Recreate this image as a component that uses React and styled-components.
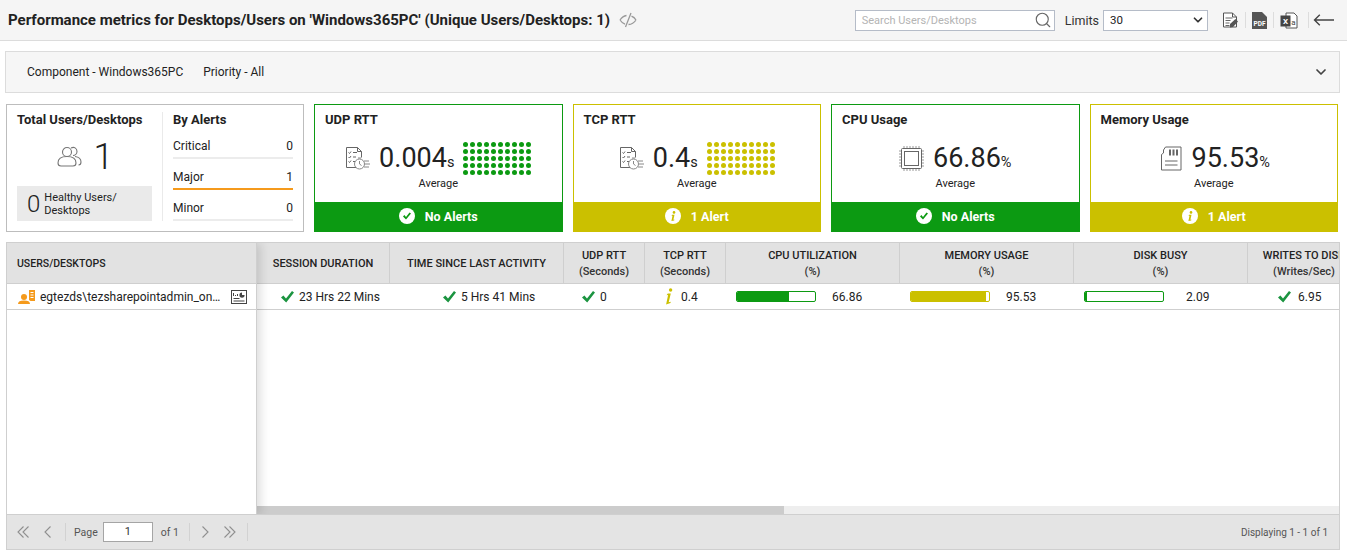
import React from "react";
import styled, { createGlobalStyle } from "styled-components";
import { Search, ChevronDown } from "lucide-react";

const GREEN = "#0c9a12";
const YELLOW = "#cbc000";

const Global = createGlobalStyle`
  html, body { margin: 0; padding: 0; background: #fff; }
  body { font-family: Roboto, "Liberation Sans", sans-serif; color: #222; }
  * { box-sizing: border-box; }
`;

const Page = styled.div`
  width: 1347px;
  height: 558px;
  overflow: hidden;
  display: flex;
  flex-direction: column;
`;

const TopBar = styled.header`
  height: 41px;
  flex: none;
  background: #f5f5f5;
  border-bottom: 1px solid #dcdcdc;
  display: flex;
  align-items: center;
  padding: 0 13px 0 8px;
`;

const Title = styled.h1`
  margin: 0;
  font-size: 15px;
  font-weight: 700;
  color: #222;
  white-space: nowrap;
`;

const TitleIcon = styled.svg`
  width: 18px;
  height: 16px;
  margin-left: 9px;
  margin-right: auto;
`;

const SearchBox = styled.div`
  width: 200px;
  height: 21px;
  border: 1px solid #b5bcc8;
  background: #fff;
  display: flex;
  align-items: center;
  justify-content: space-between;
  padding: 0 2px 0 6px;
  font-size: 11px;
  color: #b4b4b4;
`;

const LimitsLabel = styled.span`
  font-size: 12.5px;
  color: #333;
  margin-left: 10px;
`;

const LimitsSelect = styled.div`
  width: 105px;
  height: 21px;
  margin-left: 4px;
  border: 1px solid #b5bcc8;
  background: #fff;
  display: flex;
  align-items: center;
  justify-content: space-between;
  padding: 0 2px 0 6px;
  font-size: 11.5px;
  color: #222;
`;

const Tools = styled.div`
  display: flex;
  align-items: center;
  margin-left: 14px;
`;

const ToolSep = styled.span`
  width: 1px;
  height: 16px;
  background: #ddd;
  margin: 0 ${(p) => p.$r || 6}px 0 ${(p) => p.$l || 6}px;
`;

const Main = styled.main`
  flex: 1;
  min-height: 0;
  display: flex;
  flex-direction: column;
  padding: 10px 7px 8px 6px;
`;

const FilterBar = styled.div`
  height: 42px;
  flex: none;
  margin-left: -1px;
  background: #f6f6f6;
  border: 1px solid #dcdcdc;
  display: flex;
  align-items: center;
  padding: 0 10px 0 21px;
  font-size: 12px;
  color: #222;
`;

const FilterItem = styled.span`
  margin-right: 20px;
`;

const FilterToggle = styled.span`
  margin-left: auto;
  display: flex;
`;

const CardRow = styled.section`
  height: 128px;
  flex: none;
  margin: 11px 2px 0 0;
  display: flex;
  gap: 10px;
`;

const SummaryCard = styled.div`
  width: 298px;
  flex: none;
  border: 1px solid #bdbdbd;
  display: flex;
  padding: 7px 10px 10px;
`;

const SummaryLeft = styled.div`
  width: 146px;
  padding-right: 11px;
  border-right: 1px solid #eaeaea;
  display: flex;
  flex-direction: column;
`;

const CardTitle = styled.div`
  font-size: 13px;
  font-weight: 700;
  line-height: 15px;
  color: #222;
`;

const TotalLine = styled.div`
  flex: 1;
  display: flex;
  align-items: center;
  justify-content: center;
  gap: 12px;
  padding-left: 2px;
  font-size: 36px;
  font-weight: 300;
  color: #222;
`;

const HealthyBox = styled.div`
  height: 35px;
  width: 135px;
  background: #eaeaea;
  display: flex;
  align-items: center;
  padding-left: 10px;
  gap: 4px;
`;

const HealthyNum = styled.span`
  font-size: 24px;
  font-weight: 300;
`;

const HealthyText = styled.span`
  font-size: 11px;
  line-height: 13px;
`;

const SummaryRight = styled.div`
  flex: 1;
  padding-left: 10px;
`;

const AlertRows = styled.div`
  margin-top: 1px;
`;

const AlertRow = styled.div`
  height: 31px;
  display: flex;
  align-items: center;
  justify-content: space-between;
  font-size: 12px;
  color: #222;
  border-bottom: 2px solid ${(p) => p.$line || "#ececec"};
  padding-top: 7px;
`;

const MetricCard = styled.div`
  flex: 1;
  min-width: 0;
  border: 1px solid ${(p) => p.$color};
  display: flex;
  flex-direction: column;
`;

const MetricBody = styled.div`
  flex: 1;
  padding: 7px 10px 0;
`;

const MetricMain = styled.div`
  display: flex;
  align-items: center;
  justify-content: center;
  height: 37px;
  margin-top: 13px;
`;

const MetricIcon = styled.svg`
  width: 25px;
  height: 25px;
  margin-right: 9px;
  flex: none;
`;

const Value = styled.span`
  font-size: 27px;
  line-height: 34px;
  font-weight: 400;
  color: #222;
  margin-top: 3px;
`;

const Unit = styled.span`
  font-size: 14.5px;
`;

const Dots = styled.div`
  display: grid;
  grid-template-columns: repeat(10, 5px);
  grid-auto-rows: 5px;
  gap: 2px;
  margin-left: 9px;
`;

const Dot = styled.i`
  display: block;
  border-radius: 50%;
  background: ${(p) => p.$color};
`;

const Average = styled.div`
  text-align: center;
  font-size: 11px;
  line-height: 14px;
  color: #222;
`;

const AlertBar = styled.div`
  height: 30px;
  flex: none;
  margin: 0 -1px -1px;
  padding-bottom: 2px;
  background: ${(p) => p.$color};
  color: #fff;
  font-size: 12.5px;
  font-weight: 700;
  display: flex;
  align-items: center;
  justify-content: center;
  gap: 10px;
`;

const GridWrap = styled.section`
  flex: 1;
  min-height: 0;
  margin-top: 10px;
  border: 1px solid #cfcfcf;
  display: flex;
  flex-direction: column;
`;

const GridBody = styled.div`
  flex: 1;
  min-height: 0;
  display: flex;
  overflow: hidden;
`;

const FrozenCol = styled.div`
  width: 250px;
  flex: none;
  border-right: 1px solid #cfcfcf;
  box-shadow: 3px 0 10px rgba(0, 0, 0, 0.15);
  position: relative;
  background: #fff;
  z-index: 1;
`;

const FrozenHead = styled.div`
  height: 41px;
  background: #e2e2e2;
  border-bottom: 1px solid #cfcfcf;
  display: flex;
  align-items: center;
  padding-left: 10px;
  font-size: 10.5px;
  font-weight: 500;
  color: #222;
`;

const FrozenRow = styled.div`
  height: 26px;
  border-bottom: 1px solid #cfcfcf;
  display: flex;
  align-items: center;
  padding: 0 9px 0 11px;
  font-size: 12px;
  color: #222;
`;

const RowName = styled.span`
  flex: 1;
  min-width: 0;
  margin: 0 8px 0 5px;
  white-space: nowrap;
  overflow: hidden;
  text-overflow: ellipsis;
`;

const ScrollCol = styled.div`
  flex: 1;
  min-width: 0;
  display: flex;
  flex-direction: column;
  overflow: hidden;
`;

const ColsRow = styled.div`
  display: flex;
  width: max-content;
`;

const HeadCell = styled.div`
  width: ${(p) => p.$w}px;
  height: 41px;
  flex: none;
  padding-top: 2px;
  background: #e2e2e2;
  border-right: 1px solid #cfcfcf;
  border-bottom: 1px solid #cfcfcf;
  display: flex;
  flex-direction: column;
  align-items: center;
  justify-content: center;
  font-size: 11px;
  font-weight: 500;
  line-height: 16px;
  color: #222;
  white-space: nowrap;
`;

const HeadSub = styled.span`
  font-weight: 500;
  color: #333;
`;

const Cell = styled.div`
  width: ${(p) => p.$w}px;
  height: 26px;
  flex: none;
  border-bottom: 1px solid #cfcfcf;
  display: flex;
  align-items: center;
  padding-left: ${(p) => p.$pad}px;
  gap: ${(p) => p.$gap || 5}px;
  font-size: 12px;
  color: #222;
`;

const RowFill = styled.div`
  flex: 1;
`;

const Bar = styled.div`
  width: 80px;
  height: 11px;
  flex: none;
  border: 1px solid ${(p) => p.$color};
  border-radius: 2px;
  background: #fff;
  overflow: hidden;
`;

const BarFill = styled.div`
  height: 100%;
  background: ${(p) => p.$color};
`;

const ScrollTrack = styled.div`
  height: 8px;
  flex: none;
  background: #eeeeee;
`;

const ScrollThumb = styled.div`
  width: 527px;
  height: 100%;
  background: #cccccc;
`;

const Pager = styled.footer`
  height: 35px;
  flex: none;
  background: #e4e4e4;
  border-top: 1px solid #cfcfcf;
  display: flex;
  align-items: center;
  padding: 0 11px 0 10px;
  font-size: 10.5px;
  color: #555;
`;

const PagerGlyph = styled.svg`
  height: 12px;
  width: ${(p) => (p.$double ? 12 : 9)}px;
  flex: none;
  fill: none;
  stroke: #8f8f8f;
  stroke-width: 1.1;
  margin-right: ${(p) => p.$mr || 0}px;
`;

const PagerSep = styled.span`
  width: 1px;
  height: 18px;
  background: #d2d2d2;
  margin: 0 ${(p) => p.$r}px 0 ${(p) => p.$l}px;
`;

const PageInput = styled.div`
  width: 50px;
  height: 20px;
  background: #fff;
  border: 1px solid #a5a5a5;
  margin: 0 8px 0 5px;
  text-align: center;
  line-height: 18px;
  color: #333;
  font-size: 11px;
`;

const PagerInfo = styled.span`
  margin-left: auto;
  font-size: 10px;
`;

const CheckIcon = () => (
  <svg width="13" height="12" viewBox="0 0 13 12">
    <path d="M0 6.6 2.4 4.6 5 7.4 11 0l2 1.6-7.8 10z" fill="#1b9440" />
  </svg>
);

const ItalicI = () => (
  <svg width="8" height="17" viewBox="0 0 8 17">
    <circle cx="5.6" cy="2" r="1.7" fill={YELLOW} />
    <path d="M2.8 5.6h3L3.7 14.2l2-.5-.2 1.3-4.4 1.4 2-9.5-1.6.3z" fill={YELLOW} />
  </svg>
);

const BadgeCheck = () => (
  <svg width="16" height="16" viewBox="0 0 16 16">
    <circle cx="8" cy="8" r="8" fill="#fff" />
    <path d="m4 8.4 1.4-1.3 1.6 1.8 3.5-4.4L12 5.6l-5 6z" fill={GREEN} />
  </svg>
);

const BadgeInfo = () => (
  <svg width="16" height="16" viewBox="0 0 16 16">
    <circle cx="8" cy="8" r="8" fill="#fff" />
    <circle cx="9" cy="4.4" r="1.3" fill={YELLOW} />
    <path d="M7 6.8h2.5l-1.1 5 1-.2-.2.8-2.8.7 1.1-5.4-.9.2z" fill={YELLOW} />
  </svg>
);

const RttIcon = () => (
  <MetricIcon viewBox="0 0 25 25" fill="none" stroke="#666" strokeWidth="1">
    <path d="M11 21.5H1.5v-20h11l4 4v6" />
    <path d="M12.5 1.5v4h4" />
    <path d="M3.5 6.5l1 1 1.5-2M8 6.5h4M3.5 11l1 1 1.5-2M8 11h3M3.5 15.5l1 1 1.5-2M8 15.5h2" />
    <circle cx="14.5" cy="18" r="5" stroke="#888" />
    <path d="M14.5 15v3l2 1.5M13 12h3M19 15h5M20 18h5M19 21h5" stroke="#888" />
  </MetricIcon>
);

const CpuIcon = () => (
  <MetricIcon viewBox="0 0 25 25" fill="none" stroke="#666" strokeWidth="1">
    <rect x="2.5" y="2.5" width="20" height="20" rx="1" />
    <rect x="5.5" y="5.5" width="14" height="14" />
    <path
      d="M5 0v2M8 0v2M11 0v2M14 0v2M17 0v2M20 0v2M5 23v2M8 23v2M11 23v2M14 23v2M17 23v2M20 23v2M0 5h2M0 8h2M0 11h2M0 14h2M0 17h2M0 20h2M23 5h2M23 8h2M23 11h2M23 14h2M23 17h2M23 20h2"
      stroke="#999"
    />
  </MetricIcon>
);

const MemoryIcon = () => (
  <MetricIcon viewBox="0 0 25 25" fill="none" stroke="#666" strokeWidth="1">
    <path d="M7.5 1h15.5v23H3.5V8.5l2 -1.5V4z" />
    <path d="M12 3.5v6M15.5 3.5v6M19 3.5v6" strokeWidth="2" />
    <path d="M7 15h12.5M7 19h12.5" />
  </MetricIcon>
);

const metrics = [
  { title: "UDP RTT", value: "0.004", unit: "s", color: GREEN, icon: <RttIcon />, dots: true, alert: "No Alerts" },
  { title: "TCP RTT", value: "0.4", unit: "s", color: YELLOW, icon: <RttIcon />, dots: true, alert: "1 Alert" },
  { title: "CPU Usage", value: "66.86", unit: "%", color: GREEN, icon: <CpuIcon />, alert: "No Alerts" },
  { title: "Memory Usage", value: "95.53", unit: "%", color: YELLOW, icon: <MemoryIcon />, alert: "1 Alert" },
];

const columns = [
  { w: 133, label: "SESSION DURATION" },
  { w: 174, label: "TIME SINCE LAST ACTIVITY" },
  { w: 81, label: "UDP RTT", sub: "(Seconds)" },
  { w: 81, label: "TCP RTT", sub: "(Seconds)" },
  { w: 174, label: "CPU UTILIZATION", sub: "(%)" },
  { w: 174, label: "MEMORY USAGE", sub: "(%)" },
  { w: 174, label: "DISK BUSY", sub: "(%)" },
  { w: 113, label: "WRITES TO DISK", sub: "(Writes/Sec)" },
];

function MetricTile({ m }) {
  return (
    <MetricCard $color={m.color}>
      <MetricBody>
        <CardTitle>{m.title}</CardTitle>
        <MetricMain>
          {m.icon}
          <Value>
            {m.value}
            <Unit>{m.unit}</Unit>
          </Value>
          {m.dots && (
            <Dots>
              {Array.from({ length: 50 }).map((_, i) => (
                <Dot key={i} $color={m.color} />
              ))}
            </Dots>
          )}
        </MetricMain>
        <Average>Average</Average>
      </MetricBody>
      <AlertBar $color={m.color}>
        {m.color === GREEN ? <BadgeCheck /> : <BadgeInfo />}
        {m.alert}
      </AlertBar>
    </MetricCard>
  );
}

export default function App() {
  return (
    <Page>
      <Global />
      <TopBar>
        <Title>Performance metrics for Desktops/Users on 'Windows365PC' (Unique Users/Desktops: 1)</Title>
        <TitleIcon viewBox="0 0 18 16" fill="none" stroke="#999" strokeWidth="1.3">
          <path d="M1 8C3 5 5 3.8 7.5 3.5M1 8c1.5 2.2 3 3.5 5 4.2M17 8c-1-1.6-2.5-3-4.5-3.8M17 8c-2 3-4.5 4.4-7.5 4.5M12 1 6.5 15" />
        </TitleIcon>
        <SearchBox>
          Search Users/Desktops
          <Search size={18} color="#666" strokeWidth={1.5} />
        </SearchBox>
        <LimitsLabel>Limits</LimitsLabel>
        <LimitsSelect>
          30
          <ChevronDown size={14} color="#333" strokeWidth={3} />
        </LimitsSelect>
        <Tools>
          <svg width="17" height="17" viewBox="0 0 17 17">
            <path d="M1.5 1h9l4 4v10h-13z" fill="#fff" stroke="#555" />
            <path d="M10.5 1v4h4" fill="none" stroke="#555" />
            <path d="M3.5 6h7M3.5 8.5h5M3.5 11h4M3.5 13.5h4" stroke="#666" />
            <path d="m8 12 5.5-5 2.5 2.5-5 5.5-3 .5z" fill="#555" />
          </svg>
          <ToolSep />
          <svg width="15" height="17" viewBox="0 0 15 17">
            <path d="M0 0h10l5 5v12H0z" fill="#555" />
            <text x="7.5" y="14" fontSize="6.5" fontWeight="700" fill="#fff" textAnchor="middle" fontFamily="Roboto">PDF</text>
          </svg>
          <ToolSep />
          <svg width="18" height="17" viewBox="0 0 18 17">
            <path d="M6 1h8l3 3v12H6z" fill="#fff" stroke="#555" />
            <rect x="0.5" y="3.5" width="10" height="11" fill="#444" />
            <text x="5.5" y="12" fontSize="8" fontWeight="700" fill="#fff" textAnchor="middle" fontFamily="Roboto">X</text>
            <text x="13.5" y="12.5" fontSize="8" fill="#444" textAnchor="middle" fontFamily="Roboto">a</text>
          </svg>
          <ToolSep $l={10} $r={4} />
          <svg width="21" height="12" viewBox="0 0 21 12" fill="none" stroke="#444" strokeWidth="1.4">
            <path d="M21 6H1.5M6.8.8 1.5 6l5.3 5.2" />
          </svg>
        </Tools>
      </TopBar>
      <Main>
        <FilterBar>
          <FilterItem>Component - Windows365PC</FilterItem>
          <FilterItem>Priority - All</FilterItem>
          <FilterToggle>
            <ChevronDown size={16} color="#444" strokeWidth={2.6} />
          </FilterToggle>
        </FilterBar>
        <CardRow>
          <SummaryCard>
            <SummaryLeft>
              <CardTitle>Total Users/Desktops</CardTitle>
              <TotalLine>
                <svg width="25" height="22" viewBox="0 0 25 22" fill="none" stroke="#777" strokeWidth="1.1">
                  <circle cx="10" cy="6" r="4.5" />
                  <path d="M1 17c0-4.5 3-6.5 9-6.5s9 2 9 6.5c0 2-1 3-3 3H4c-2 0-3-1-3-3z" />
                  <path d="M14 2c3-1.5 6 0 6 3.5 0 2.5-2 4-4 4M18 10.5c4 .5 6 2.5 6 5.5 0 2-1 3-2.5 3" />
                </svg>
                1
              </TotalLine>
              <HealthyBox>
                <HealthyNum>0</HealthyNum>
                <HealthyText>
                  Healthy Users/
                  <br />
                  Desktops
                </HealthyText>
              </HealthyBox>
            </SummaryLeft>
            <SummaryRight>
              <CardTitle>By Alerts</CardTitle>
              <AlertRows>
                <AlertRow>
                  <span>Critical</span>
                  <span>0</span>
                </AlertRow>
                <AlertRow $line="#f59a1c">
                  <span>Major</span>
                  <span>1</span>
                </AlertRow>
                <AlertRow>
                  <span>Minor</span>
                  <span>0</span>
                </AlertRow>
              </AlertRows>
            </SummaryRight>
          </SummaryCard>
          {metrics.map((m) => (
            <MetricTile key={m.title} m={m} />
          ))}
        </CardRow>
        <GridWrap>
          <GridBody>
            <FrozenCol>
              <FrozenHead>USERS/DESKTOPS</FrozenHead>
              <FrozenRow>
                <svg width="17" height="16" viewBox="0 0 17 16" fill="#f59a1c">
                  <circle cx="6" cy="8" r="3" />
                  <path d="M0 15c0-2.5 2-3.5 6-3.5s6 1 6 3.5z" />
                  <path d="M11 1h6v11h-4.5l-1.5-1z" />
                  <path d="M12.5 3.5h3M12.5 6h3M12.5 8.5h3" stroke="#fff" />
                </svg>
                <RowName>egtezds\tezsharepointadmin_onmicrosoft</RowName>
                <svg width="16" height="14" viewBox="0 0 16 14">
                  <rect x="0.5" y="0.5" width="15" height="13" fill="#fff" stroke="#444" />
                  <path d="M2.5 3v3M4.5 5v1M6.5 4v2" stroke="#444" />
                  <path d="M11 2.5a2.6 2.6 0 1 0 2.6 2.6H11z" fill="#444" />
                  <path d="M2.5 8.5h6M2.5 11h11" stroke="#444" />
                </svg>
              </FrozenRow>
            </FrozenCol>
            <ScrollCol>
              <ColsRow>
                {columns.map((c) => (
                  <HeadCell key={c.label} $w={c.w}>
                    {c.label}
                    {c.sub && <HeadSub>{c.sub}</HeadSub>}
                  </HeadCell>
                ))}
              </ColsRow>
              <ColsRow>
                <Cell $w={133} $pad={24}>
                  <CheckIcon />
                  23 Hrs 22 Mins
                </Cell>
                <Cell $w={174} $pad={53}>
                  <CheckIcon />
                  5 Hrs 41 Mins
                </Cell>
                <Cell $w={81} $pad={18}>
                  <CheckIcon />
                  0
                </Cell>
                <Cell $w={81} $pad={20} $gap={8}>
                  <ItalicI />
                  0.4
                </Cell>
                <Cell $w={174} $pad={10} $gap={16}>
                  <Bar $color={GREEN}>
                    <BarFill $color={GREEN} style={{ width: "66.86%" }} />
                  </Bar>
                  66.86
                </Cell>
                <Cell $w={174} $pad={10} $gap={16}>
                  <Bar $color={YELLOW}>
                    <BarFill $color={YELLOW} style={{ width: "95.53%" }} />
                  </Bar>
                  95.53
                </Cell>
                <Cell $w={174} $pad={10} $gap={22}>
                  <Bar $color={GREEN}>
                    <BarFill $color={GREEN} style={{ width: "2.09%" }} />
                  </Bar>
                  2.09
                </Cell>
                <Cell $w={113} $pad={30} $gap={7}>
                  <CheckIcon />
                  6.95
                </Cell>
              </ColsRow>
              <RowFill />
              <ScrollTrack>
                <ScrollThumb />
              </ScrollTrack>
            </ScrollCol>
          </GridBody>
          <Pager>
            <PagerGlyph $double $mr={14} viewBox="0 0 12 12">
              <path d="M6.5.5 1 6l5.5 5.5M11.5.5 6 6l5.5 5.5" />
            </PagerGlyph>
            <PagerGlyph viewBox="0 0 9 12">
              <path d="M7.5.5 2 6l5.5 5.5" />
            </PagerGlyph>
            <PagerSep $l={13} $r={8} />
            Page
            <PageInput>1</PageInput>
            of 1
            <PagerSep $l={10} $r={11} />
            <PagerGlyph $mr={14} viewBox="0 0 9 12">
              <path d="M1.5.5 7 6l-5.5 5.5" />
            </PagerGlyph>
            <PagerGlyph $double viewBox="0 0 12 12">
              <path d="M.5.5 6 6 .5 11.5M5.5.5 11 6l-5.5 5.5" />
            </PagerGlyph>
            <PagerSep $l={11} $r={0} />
            <PagerInfo>Displaying 1 - 1 of 1</PagerInfo>
          </Pager>
        </GridWrap>
      </Main>
    </Page>
  );
}
